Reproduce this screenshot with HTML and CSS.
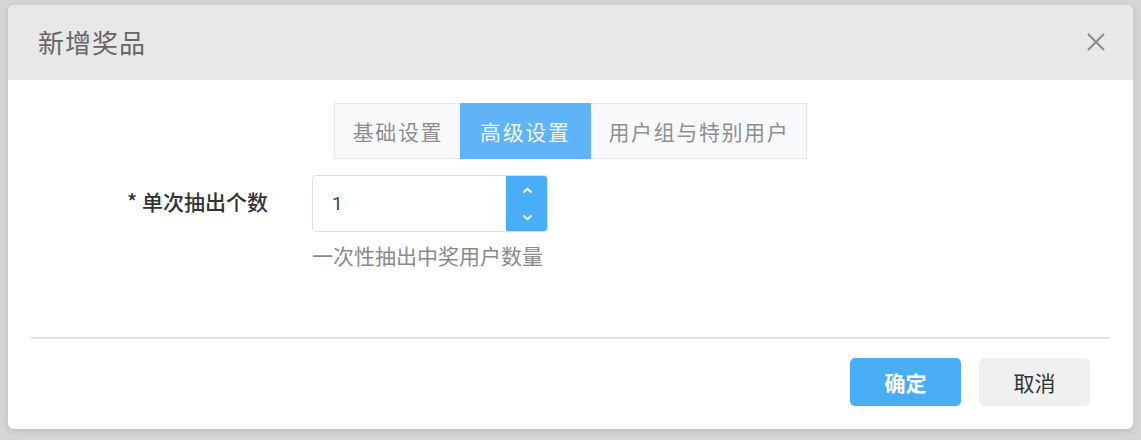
FILE: index.html
```html
<!DOCTYPE html>
<html lang="zh">
<head>
<meta charset="utf-8">
<link rel="stylesheet" href="styles.css">
</head>
<body>
<div class="dialog">
  <div class="dialog-header">
    <span class="dialog-title">新增奖品</span>
    <svg class="close" width="18" height="18" viewBox="0 0 18 18"><path d="M1 1L17 17M17 1L1 17" stroke="#8a8a8a" stroke-width="2" fill="none"/></svg>
  </div>
  <div class="dialog-body">
    <div class="tabs">
      <div class="tab">基础设置</div>
      <div class="tab active">高级设置</div>
      <div class="tab">用户组与特别用户</div>
    </div>
    <div class="form-row">
      <div class="label">* 单次抽出个数</div>
      <div class="field">
        <div class="number-input">
          <div class="value">1</div>
          <div class="spinner">
            <svg width="11" height="7" viewBox="0 0 11 7"><path d="M1.5 5.5L5.5 1.8L9.5 5.5" stroke="#fff" stroke-width="2" fill="none"/></svg>
            <svg width="11" height="7" viewBox="0 0 11 7"><path d="M1.5 1.5L5.5 5.2L9.5 1.5" stroke="#fff" stroke-width="2" fill="none"/></svg>
          </div>
        </div>
        <div class="help">一次性抽出中奖用户数量</div>
      </div>
    </div>
  </div>
  <div class="divider"></div>
  <div class="dialog-footer">
    <button class="btn primary">确定</button>
    <button class="btn">取消</button>
  </div>
</div>
</body>
</html>
```
FILE: styles.css
```css
html, body {
  margin: 0;
  padding: 0;
}
body {
  background: #d5d5d8;
  padding: 5px 8px 0 8px;
  font-family: "Noto Sans CJK SC", "Noto Sans", sans-serif;
  height: 440px;
  box-sizing: border-box;
}
.dialog {
  width: 1125px;
  height: 424px;
  background: #fff;
  border-radius: 6px;
  box-shadow: 0 2px 6px rgba(0,0,0,0.12);
  overflow: hidden;
  display: flex;
  flex-direction: column;
}
.dialog-header {
  height: 75px;
  background: #e8e8e8;
  display: flex;
  align-items: center;
  justify-content: space-between;
  padding: 0 28px 0 30px;
  flex-shrink: 0;
}
.dialog-title {
  font-size: 26px;
  color: #666;
  line-height: 1;
  margin-top: -2px;
  letter-spacing: 1px;
}
.close {
  display: block;
  margin-top: -2px;
}
.dialog-body {
  padding: 23px 23px 0 23px;
  height: 257px;
  box-sizing: border-box;
  flex-shrink: 0;
}
.tabs {
  display: flex;
  width: max-content;
  margin: 0 auto;
  border: 1px solid #e4e6ea;
  background: #f8f9fb;
  height: 56px;
  box-sizing: border-box;
}
.tab {
  font-size: 21px;
  color: #8f8f8f;
  padding: 0 17px 0 18px;
  display: flex;
  align-items: center;
  letter-spacing: 1.6px;
}
.tab.active {
  background: #5eb4f6;
  color: #eef7ff;
  margin: -1px 0;
  padding: 0 20px 0 20px;
}
.form-row {
  display: flex;
  margin-top: 16px;
}
.label {
  width: 281px;
  box-sizing: border-box;
  padding-right: 44px;
  text-align: right;
  font-size: 21px;
  font-weight: 500;
  color: #333;
  line-height: 52px;
}
.number-input {
  width: 236px;
  height: 57px;
  border: 1px solid #dcdfe6;
  border-radius: 4px;
  box-sizing: border-box;
  display: flex;
  overflow: hidden;
}
.value {
  flex: 1;
  font-family: "Roboto", "Noto Sans", sans-serif;
  font-size: 19px;
  color: #444;
  padding-left: 19px;
  display: flex;
  align-items: center;
}
.spinner {
  width: 42px;
  background: #4aadf7;
  margin: -1px -1px -1px 0;
  display: flex;
  flex-direction: column;
  align-items: center;
  justify-content: center;
  gap: 20px;
}
.spinner svg {
  display: block;
}
.help {
  font-size: 21px;
  color: #8a8a8a;
  margin-top: 7px;
  line-height: 32px;
}
.divider {
  height: 2px;
  background: #e4e4e4;
  margin: 0 23px;
  flex-shrink: 0;
}
.dialog-footer {
  display: flex;
  justify-content: flex-end;
  gap: 18px;
  padding: 19px 43px 0 0;
}
.btn {
  width: 111px;
  height: 48px;
  border: none;
  border-radius: 5px;
  background: #eef0f2;
  color: #333;
  font-family: "Noto Sans CJK SC", "Noto Sans", sans-serif;
  font-size: 21px;
  padding: 0;
}
.btn.primary {
  background: #4aaef6;
  color: #fff;
  font-weight: 700;
}
```
